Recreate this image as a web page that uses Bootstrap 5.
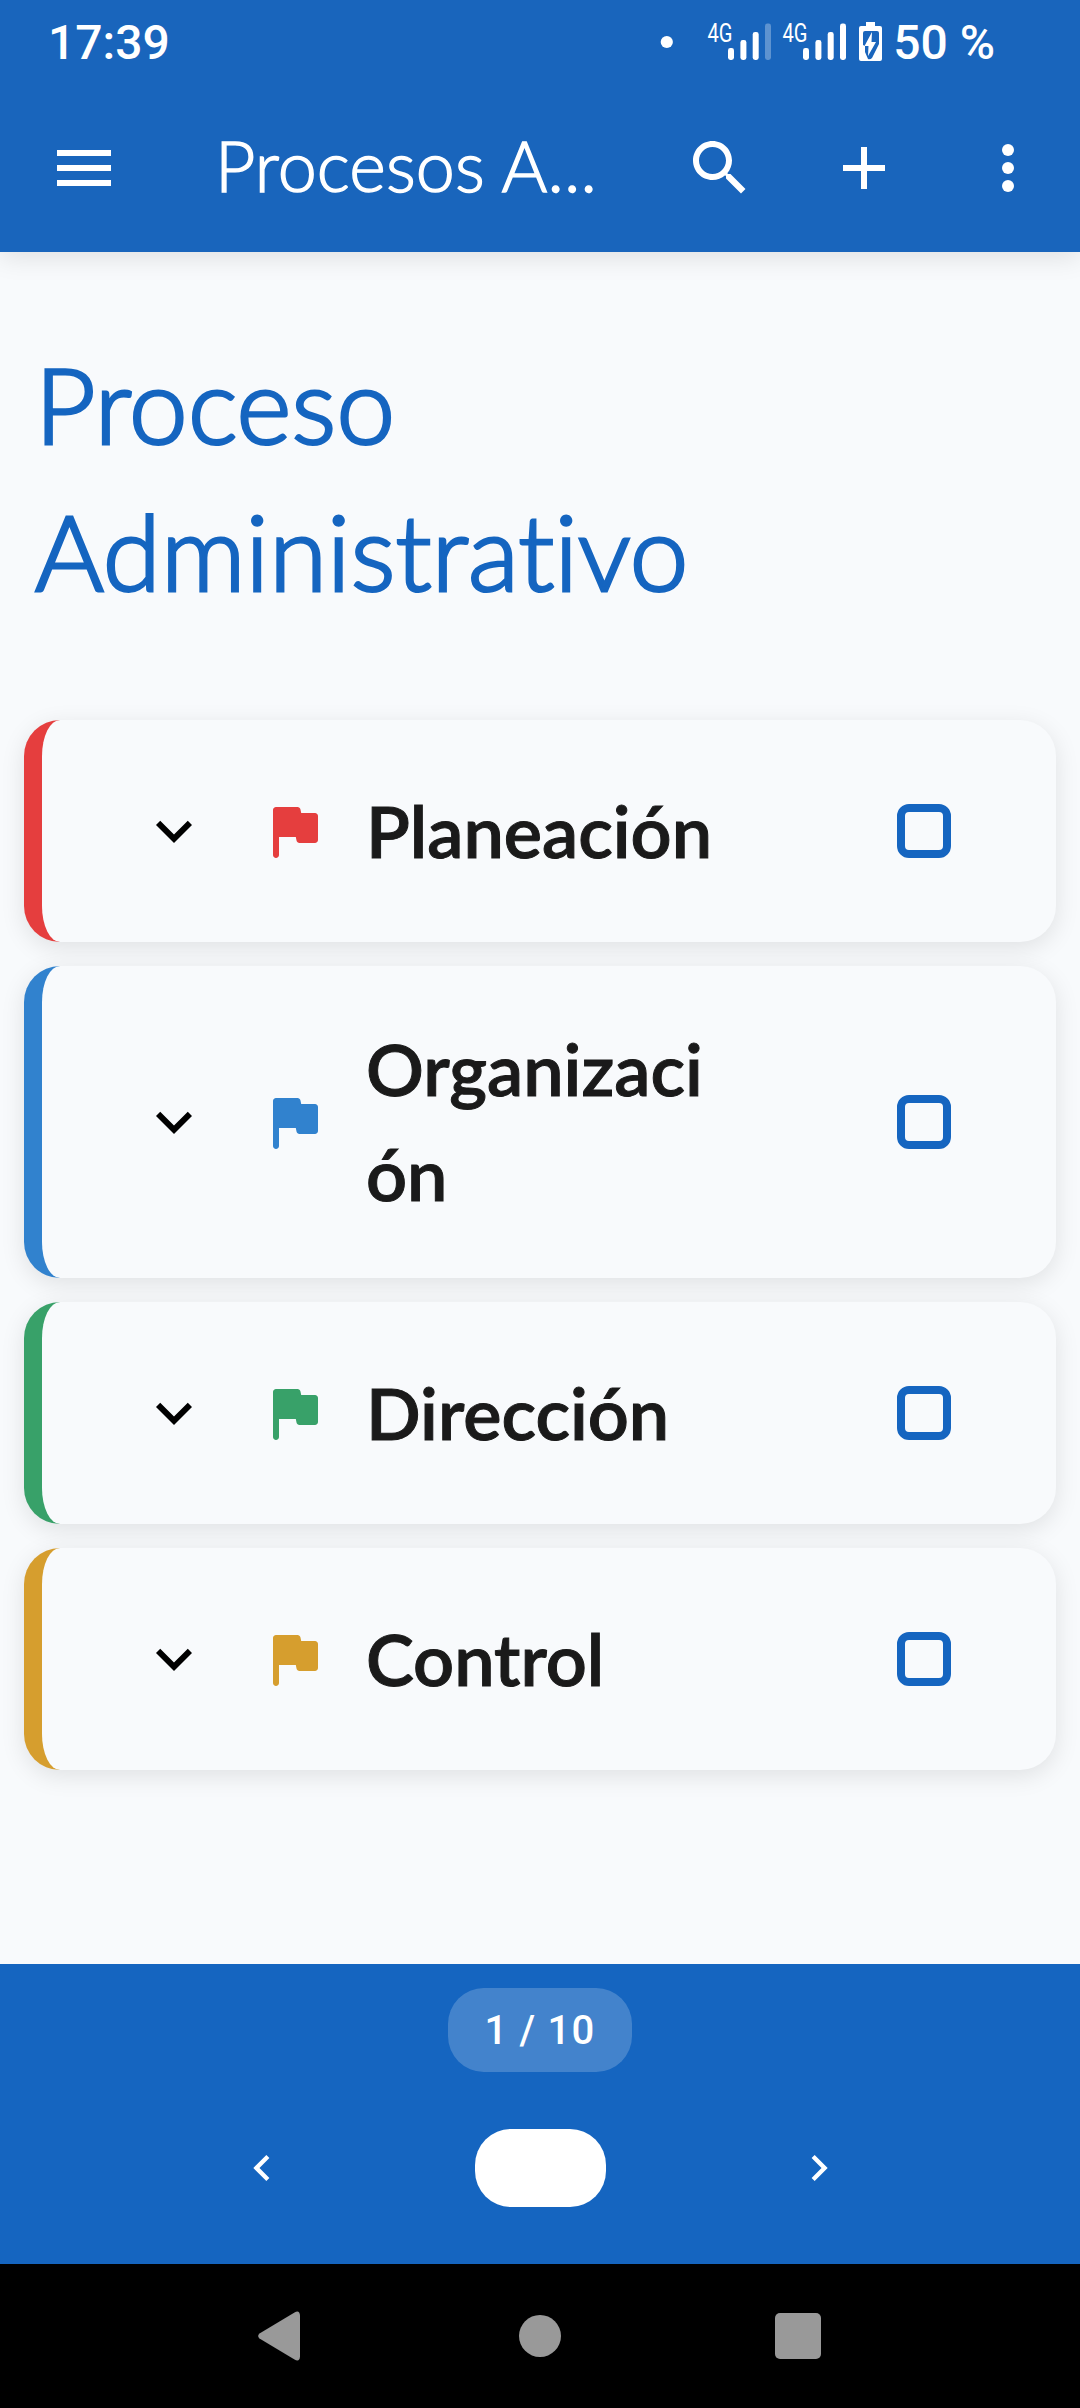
<!DOCTYPE html>
<html lang="es">
<head>
<meta charset="utf-8">
<meta name="viewport" content="width=device-width, initial-scale=1">
<title>Procesos Administrativos</title>
<link href="https://cdn.jsdelivr.net/npm/bootstrap@5.3.0/dist/css/bootstrap.min.css" rel="stylesheet">
<style>
  :root { --brand: #1565c0; --brand-bar: #1965bc; --surface: #f8fafc; }
  body { background: var(--surface); font-family: Lato, sans-serif; color: #1a1a1a; height: 2408px; overflow: hidden; }
  svg { display: block; flex: none; }
  .app-header { background: var(--brand-bar); height: 252px; box-shadow: 0 6px 24px rgba(0,0,0,.1); }
  .status-row { height: 84px; padding-left: 48px; padding-right: 85px; font: 500 48px/84px Roboto, sans-serif; }
  .status-text { padding-top: 1px; }
  .status-icons { width: 224px; margin-right: 11px; }
  .bar-row { height: 96px; margin-top: 36px; padding: 0 36px 0 48px; }
  .bar-title { margin-left: 95px; width: 390px; font-size: 70px; font-weight: 300; line-height: 90px; padding-bottom: 6px; letter-spacing: .1px; -webkit-text-stroke: 1.4px #fff; }
  .bar-actions { gap: 72px; }
  .page-title { color: var(--brand); font-size: 105px; font-weight: 300; line-height: 147px; letter-spacing: .2px; font-variant-ligatures: none; -webkit-text-stroke: 3px var(--brand); padding: 78px 0 0 35px; height: 396px; }
  .process-list { padding: 72px 24px 0; gap: 24px; }
  .process-card { border: 0; border-left: 18px solid var(--tone); border-radius: 36px; background: var(--surface); min-height: 222px; padding: 51px 105px 51px 96px; box-shadow: 0 6px 24px rgba(0,0,0,.1); }
  .process-name { width: 356px; margin: -1px 0 1px 36px; font-size: 72px; font-weight: 600; line-height: 105px; overflow-wrap: anywhere; -webkit-text-stroke: 1px #1a1a1a; }
  .flag-icon { margin-left: 48px; fill: var(--tone); }
  .check-box { width: 54px; height: 54px; border: 8px solid var(--brand); border-radius: 12px; }
  .tone-red { --tone: #e53e3e; } .tone-blue { --tone: #3182ce; } .tone-green { --tone: #38a169; } .tone-gold { --tone: #d69e2e; }
  .pager { background: var(--brand); height: 300px; padding-top: 24px; }
  .page-count { background: rgba(255,255,255,.2); width: 184px; height: 84px; border-radius: 36px; font: 500 40px/86px Roboto, sans-serif; letter-spacing: 1.2px; }
  .pager-controls { margin-top: 57px; gap: 187px; }
  .page-thumb { width: 131px; height: 78px; border-radius: 36px; }
  .system-nav { height: 144px; gap: 219px; padding-right: 1px; }
  .nav-recents { margin-left: -5px; }
</style>
</head>
<body class="d-flex flex-column m-0">
<header class="app-header text-white flex-shrink-0 position-relative">
  <div class="status-row d-flex justify-content-between">
    <span class="status-text">17:39</span>
    <div class="d-flex">
      <svg class="status-icons" width="224" height="84" viewBox="659 0 224 84" fill="#fff">
        <circle cx="667.8" cy="42" r="6.1"/>
        <g id="signal">
          <text x="708.5" y="42" font-family="Roboto, sans-serif" font-weight="400" font-size="25.5" textLength="25" lengthAdjust="spacingAndGlyphs">4G</text>
          <rect x="729" y="48" width="6" height="12" rx="2.4"/><rect x="741.4" y="40" width="6" height="20" rx="2.4"/><rect x="753.7" y="32" width="6" height="28" rx="2.4"/>
        </g>
        <rect x="766" y="23.5" width="6" height="36.5" rx="2.4" opacity=".3"/>
        <use href="#signal" x="75"/>
        <rect x="841" y="23.5" width="6" height="36.5" rx="2.4"/>
        <path fill-rule="evenodd" d="M867 22h9v4h5q2 0 2 2v31q0 2-2 2h-19q-2 0-2-2v-31q0-2 2-2h5zM873 31h-7q-2 0-2 2v12l2 1v6l3 7q2 1 4-1l7-14v-11q0-2-2-2z"/>
        <path d="M873 32l-7.500 14h4l-.5 10 8-14h-4.500z"/>
      </svg>
      <span class="status-text">50 %</span>
    </div>
  </div>
  <nav class="bar-row d-flex align-items-center">
    <svg width="72" height="72" viewBox="0 0 24 24" fill="#fff"><path d="M3 18h18v-2H3v2zm0-5h18v-2H3v2zm0-7v2h18V6z"/></svg>
    <div class="bar-title text-nowrap">Procesos A...</div>
    <div class="bar-actions d-flex ms-auto">
      <svg width="72" height="72" viewBox="0 0 24 24" fill="#fff"><path d="M15.500 14h-.79l-.28-.27C15.410 12.590 16 11.110 16 9.500 16 5.910 13.090 3 9.500 3S3 5.910 3 9.500 5.910 16 9.500 16c1.610 0 3.090-.59 4.230-1.570l.27.28v.79l5 4.990L20.490 19l-4.990-5zm-6 0C7.010 14 5 11.990 5 9.500S7.010 5 9.500 5 14 7.010 14 9.500 11.990 14 9.500 14z"/></svg>
      <svg width="72" height="72" viewBox="0 0 24 24" fill="#fff"><path d="M19 13h-6v6h-2v-6H5v-2h6V5h2v6h6z"/></svg>
      <svg width="72" height="72" viewBox="0 0 24 24" fill="#fff"><circle cx="12" cy="6" r="2"/><circle cx="12" cy="12" r="2"/><circle cx="12" cy="18" r="2"/></svg>
    </div>
  </nav>
</header>

<svg class="d-none">
  <symbol id="chevron" viewBox="0 0 24 24"><path d="M16.590 8.590L12 13.170 7.410 8.590 6 10l6 6 6-6z"/></symbol>
  <symbol id="flag" viewBox="0 0 24 24"><path d="M14.400 6l-.24-1.200c-.09-.46-.5-.8-.98-.8H6c-.55 0-1 .45-1 1v15c0 .55.45 1 1 1s1-.45 1-1v-6h5.600l.24 1.200c.09.47.5.8.98.8H19c.55 0 1-.45 1-1V7c0-.55-.45-1-1-1h-4.600z"/></symbol>
</svg>

<main class="flex-grow-1">
  <h1 class="page-title m-0">Proceso<br>Administrativo</h1>
  <div class="process-list d-flex flex-column">
    <div class="process-card card flex-row align-items-center tone-red">
      <svg width="72" height="72"><use href="#chevron"/></svg>
      <svg class="flag-icon" width="72" height="72"><use href="#flag"/></svg>
      <div class="process-name">Planeación</div><span class="check-box ms-auto"></span>
    </div>
    <div class="process-card card flex-row align-items-center tone-blue">
      <svg width="72" height="72"><use href="#chevron"/></svg>
      <svg class="flag-icon" width="72" height="72"><use href="#flag"/></svg>
      <div class="process-name">Organización</div><span class="check-box ms-auto"></span>
    </div>
    <div class="process-card card flex-row align-items-center tone-green">
      <svg width="72" height="72"><use href="#chevron"/></svg>
      <svg class="flag-icon" width="72" height="72"><use href="#flag"/></svg>
      <div class="process-name">Dirección</div><span class="check-box ms-auto"></span>
    </div>
    <div class="process-card card flex-row align-items-center tone-gold">
      <svg width="72" height="72"><use href="#chevron"/></svg>
      <svg class="flag-icon" width="72" height="72"><use href="#flag"/></svg>
      <div class="process-name">Control</div><span class="check-box ms-auto"></span>
    </div>
  </div>
</main>

<footer class="flex-shrink-0">
  <div class="pager text-white d-flex flex-column align-items-center">
    <div class="page-count text-center">1 / 10</div>
    <div class="pager-controls d-flex align-items-center justify-content-center">
      <svg width="52" height="52" viewBox="0 0 24 24" fill="#fff"><path d="M15.410 7.410L14 6l-6 6 6 6 1.410-1.410L10.830 12z"/></svg>
      <div class="page-thumb bg-white"></div>
      <svg width="52" height="52" viewBox="0 0 24 24" fill="#fff"><path d="M8.590 7.410L10 6l6 6-6 6-1.410-1.410L13.170 12z"/></svg>
    </div>
  </div>
  <div class="system-nav bg-black d-flex align-items-center justify-content-center">
    <svg width="42" height="50" viewBox="0 0 42 50" fill="#999"><path d="M36.500 1.500Q41.500-1.500 42 4.500V45.500Q41.500 51.500 36.500 48.500L1.500 27.500Q-1.200 25 1.500 22.500z"/></svg>
    <svg width="42" height="42"><circle cx="21" cy="21" r="21" fill="#999"/></svg>
    <svg class="nav-recents" width="46" height="46"><rect width="46" height="46" rx="5" fill="#999"/></svg>
  </div>
</footer>
<script src="https://cdn.jsdelivr.net/npm/bootstrap@5.3.0/dist/js/bootstrap.bundle.min.js"></script>
</body>
</html>
